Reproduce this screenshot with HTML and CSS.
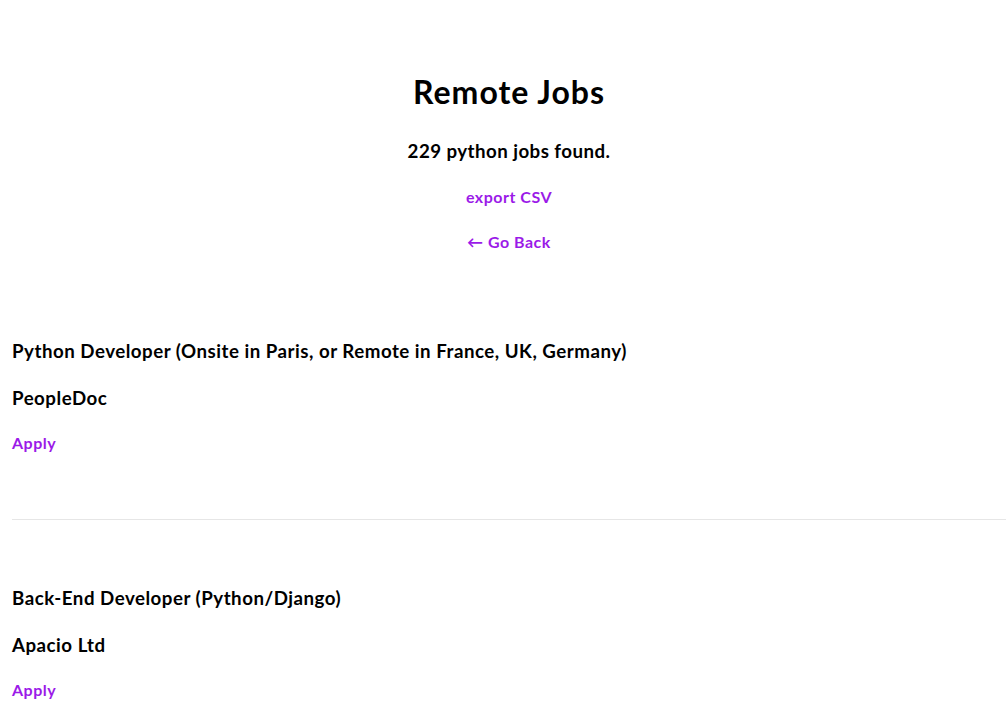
FILE: index.html
```html
<!DOCTYPE html>
<html lang="en">
<head>
<meta charset="utf-8">
<title>Remote Jobs</title>
<link rel="stylesheet" href="styles.css">
</head>
<body>
<header class="header">
  <h1 class="title">Remote Jobs</h1>
  <h3 class="count">229 python jobs found.</h3>
  <a class="link" href="#">export CSV</a>
  <a class="link back" href="#">← Go Back</a>
</header>
<main class="jobs">
  <section class="job">
    <h3 class="job-title">Python Developer (Onsite in Paris, or Remote in France, UK, Germany)</h3>
    <h3 class="company">PeopleDoc</h3>
    <a class="link apply" href="#">Apply</a>
  </section>
  <hr class="divider">
  <section class="job">
    <h3 class="job-title">Back-End Developer (Python/Django)</h3>
    <h3 class="company">Apacio Ltd</h3>
    <a class="link apply" href="#">Apply</a>
  </section>
</main>
</body>
</html>
```
FILE: styles.css
```css
html, body {
  margin: 0;
  padding: 0;
  background: #fff;
}
body {
  font-family: "Lato", "Open Sans", sans-serif;
  font-weight: 700;
  color: #000;
  padding: 0 2px 0 12px;
}
.header {
  display: flex;
  flex-direction: column;
  align-items: center;
  padding-top: 72px;
}
.title {
  margin: 0;
  font-size: 32px;
  line-height: 40px;
  letter-spacing: 1px;
}
.count {
  margin: 27px 0 0;
  font-size: 18.72px;
  line-height: 24px;
  letter-spacing: 0.45px;
}
.link {
  display: block;
  color: #9b1ae8;
  text-decoration: none;
  font-size: 16px;
  line-height: 22px;
  margin-top: 23px;
  letter-spacing: 0.5px;
}
.back {
  margin-top: 23px;
}
.jobs {
  margin-top: 86px;
}
.job {
  display: flex;
  flex-direction: column;
  align-items: flex-start;
}
.job-title, .company {
  margin: 0;
  font-size: 18.72px;
  line-height: 24px;
  letter-spacing: 0.5px;
}
.company {
  margin-top: 23px;
}
.apply {
  margin-top: 22px;
}
.divider {
  border: 0;
  border-top: 1px solid #e6e6e6;
  margin: 65px 0 66px;
  height: 0;
}
```
